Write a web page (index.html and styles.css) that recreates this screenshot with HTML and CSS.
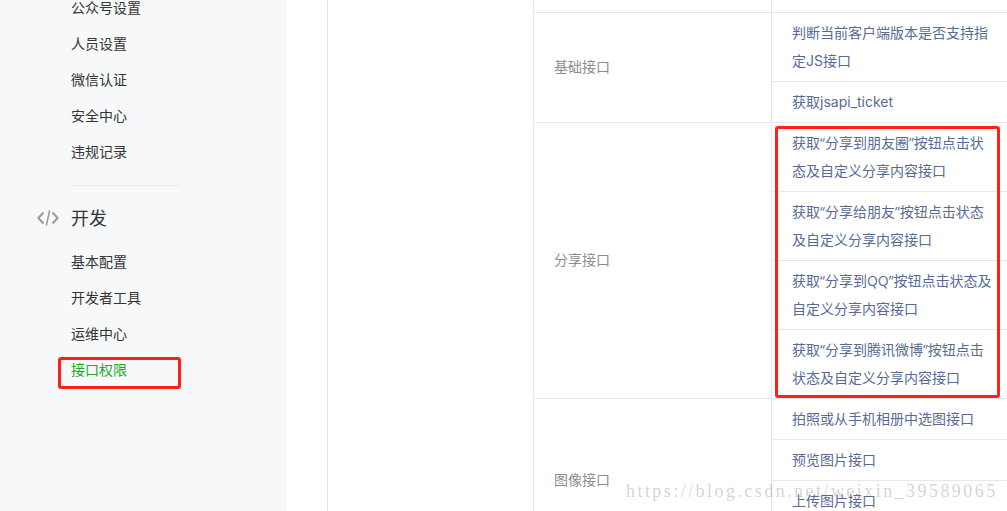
FILE: index.html
```html
<!DOCTYPE html>
<html lang="zh-CN">
<head>
<meta charset="utf-8">
<title>接口权限</title>
<link rel="stylesheet" href="styles.css">
</head>
<body>
<div class="page">
  <aside class="sidebar">
    <ul class="menu">
      <li>公众号设置</li>
      <li>人员设置</li>
      <li>微信认证</li>
      <li>安全中心</li>
      <li>违规记录</li>
    </ul>
    <div class="divider"></div>
    <h3 class="menu-title">
      <svg class="menu-icon" viewBox="0 0 22 16" width="22" height="16" aria-hidden="true">
        <path d="M6.5 2.5 1.4 8l5.1 5.5M15.5 2.5 20.6 8l-5.1 5.5" fill="none" stroke="#9a9a9a" stroke-width="2"/>
        <path d="M12.6 0.5 9.4 15.5" fill="none" stroke="#9a9a9a" stroke-width="1.5"/>
      </svg>
      开发
    </h3>
    <ul class="menu">
      <li>基本配置</li>
      <li>开发者工具</li>
      <li>运维中心</li>
      <li class="active">接口权限<span class="mark mark-nav"></span></li>
    </ul>
  </aside>
  <main class="content">
    <div class="table">
      <div class="group stub">
        <div class="label"></div>
        <div class="rows"></div>
      </div>
      <div class="group">
        <div class="label">基础接口</div>
        <div class="rows">
          <div class="row">判断当前客户端版本是否支持指定<span class="latin">JS</span>接口</div>
          <div class="row">获取<span class="latin">jsapi_ticket</span></div>
        </div>
      </div>
      <div class="group">
        <div class="label">分享接口</div>
        <div class="rows">
          <div class="row">获取“分享到朋友圈”按钮点击状态及自定义分享内容接口</div>
          <div class="row">获取“分享给朋友”按钮点击状态及自定义分享内容接口</div>
          <div class="row">获取“分享到QQ”按钮点击状态及自定义分享内容接口</div>
          <div class="row">获取“分享到腾讯微博”按钮点击状态及自定义分享内容接口</div>
          <span class="mark mark-table"></span>
        </div>
      </div>
      <div class="group">
        <div class="label">图像接口</div>
        <div class="rows">
          <div class="row">拍照或从手机相册中选图接口</div>
          <div class="row">预览图片接口</div>
          <div class="row">上传图片接口</div>
          <div class="row">下载图片接口</div>
        </div>
      </div>
    </div>
  </main>
</div>
<div class="watermark">https://blog.csdn.net/weixin_39589065</div>
</body>
</html>
```
FILE: styles.css
```css
html, body {
  margin: 0;
  height: 511px;
  overflow: hidden;
  background: #fff;
}

body {
  position: relative;
  font-family: "Open Sans", "Noto Sans CJK SC", sans-serif;
  font-size: 14px;
  color: #353535;
}

.page {
  display: flex;
  height: 511px;
  overflow: hidden;
}

.sidebar {
  flex: 0 0 287px;
  box-sizing: border-box;
  padding-left: 71px;
  background: #f6f8f9;
}

.menu {
  list-style: none;
  margin: 0;
  padding: 0;
}

.sidebar > .menu:first-child {
  margin-top: -10px;
}

.menu li {
  position: relative;
  height: 36px;
  line-height: 36px;
}

.menu .active {
  color: #1aad19;
}

.divider {
  width: 108px;
  margin-top: 15px;
  border-top: 1px solid #e7e7eb;
}

.menu-title {
  position: relative;
  margin: 0;
  padding: 14px 0 8px;
  font-size: 18px;
  font-weight: 400;
  line-height: 36px;
}

.menu-icon {
  position: absolute;
  left: -34px;
  top: 24px;
}

.mark {
  position: absolute;
  box-sizing: border-box;
  border: 3px solid #ff2116;
  border-radius: 3px;
}

.mark-nav {
  left: -13px;
  top: 5px;
  width: 123px;
  height: 32px;
}

.content {
  flex: 1;
  display: flex;
  min-width: 0;
  margin-left: 40px;
  padding-left: 205px;
  border-left: 1px solid #e7e7eb;
}

.table {
  flex: 0 0 480px;
  border-left: 1px solid #e7e7eb;
}

.group {
  display: flex;
  border-bottom: 1px solid #e7e7eb;
}

.stub {
  height: 12px;
}

.label {
  flex: 0 0 238px;
  box-sizing: border-box;
  display: flex;
  align-items: center;
  padding: 0 0 4px 20px;
  border-right: 1px solid #e7e7eb;
  color: #8d8d8d;
}

.rows {
  position: relative;
  flex: 1;
}

.row {
  padding: 6px 20px;
  line-height: 28px;
  color: #576b95;
  border-bottom: 1px solid #e7e7eb;
}

.latin {
  font-family: Inter, sans-serif;
}

.row:nth-last-child(1),
.row:nth-last-child(2):has(+ .mark) {
  border-bottom: 0;
}

.mark-table {
  left: 3px;
  top: 3px;
  width: 225px;
  height: 272px;
}

.watermark {
  position: absolute;
  left: 626px;
  top: 481px;
  font-family: "Liberation Serif", serif;
  font-size: 18px;
  letter-spacing: 2.45px;
  line-height: 20px;
  color: rgba(120, 120, 110, 0.33);
  white-space: nowrap;
}
```
